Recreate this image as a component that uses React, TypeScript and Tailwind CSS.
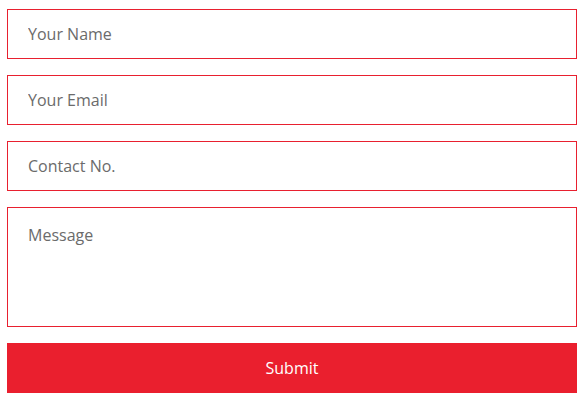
import React from "react";

export default function App() {
  const fields = ["Your Name", "Your Email", "Contact No."];

  return (
    <div className="bg-white w-[583px] h-[404px] pt-[9px] pl-[7px] font-['Open_Sans',sans-serif]">
      <form className="w-[570px] flex flex-col gap-4">
        {fields.map((f) => (
          <input
            key={f}
            type="text"
            placeholder={f}
            className="h-[50px] w-full border border-[#e8202f] px-5 text-base text-[#555] placeholder:text-[#6b6b6b] outline-none"
          />
        ))}
        <textarea
          placeholder="Message"
          className="h-[120px] w-full border border-[#e8202f] px-5 pt-[15px] text-base text-[#555] placeholder:text-[#6b6b6b] outline-none resize-none"
        />
        <button
          type="button"
          className="h-[50px] w-full bg-[#ea1f2e] text-white text-base"
        >
          Submit
        </button>
      </form>
    </div>
  );
}
